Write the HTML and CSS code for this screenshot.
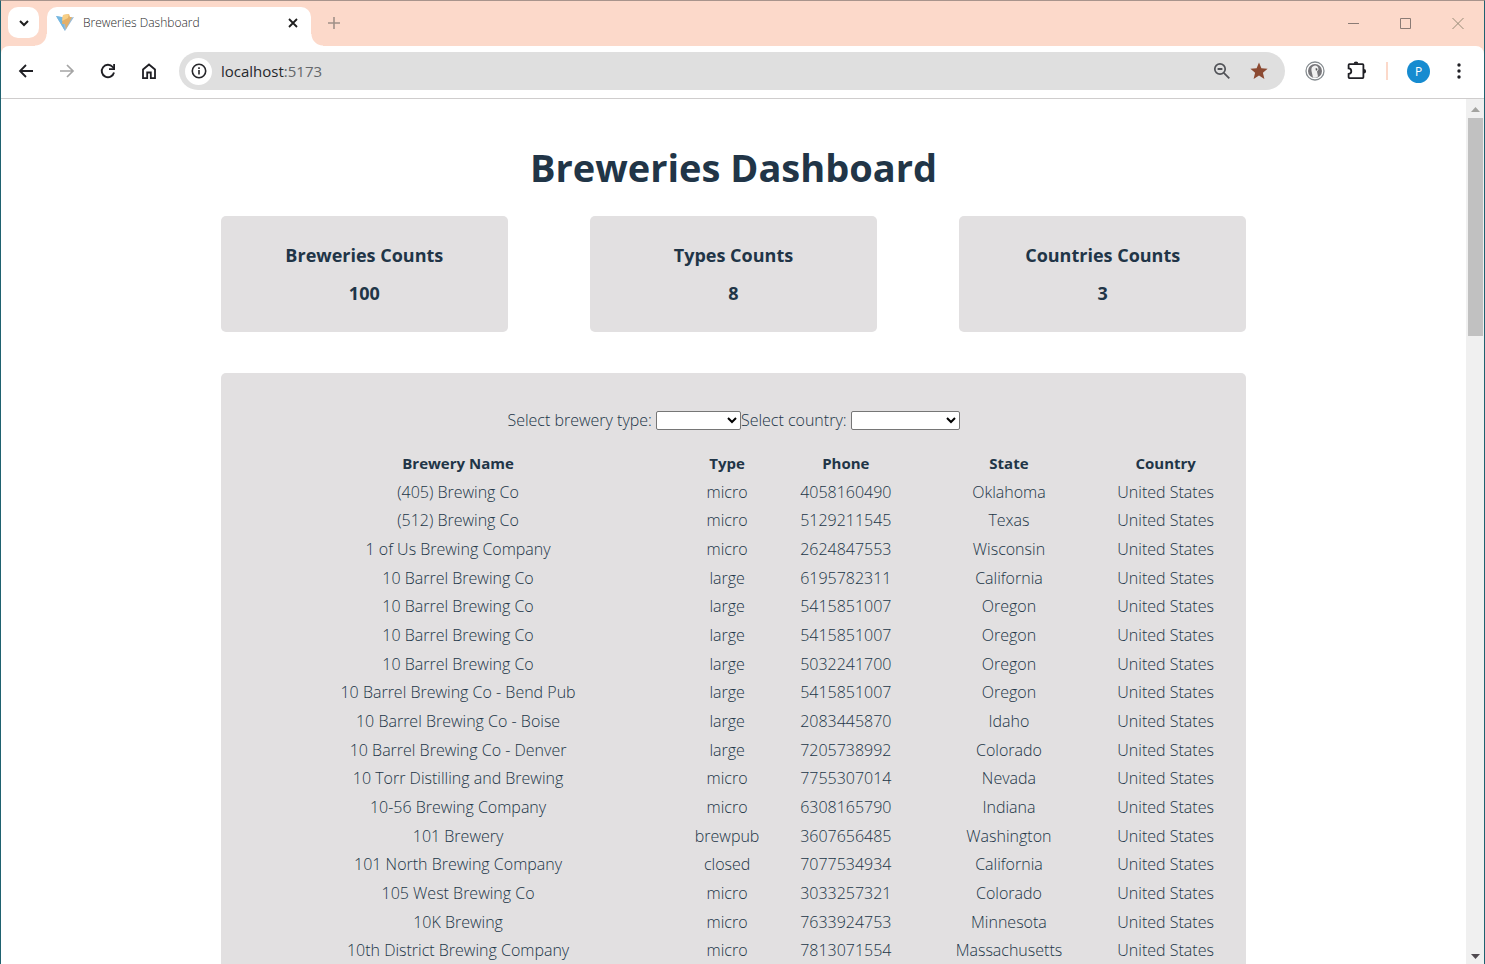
FILE: index.html
```html
<!DOCTYPE html>
<html lang="en">
<head>
<meta charset="utf-8">
<title>Breweries Dashboard</title>
<link rel="stylesheet" href="styles.css">
</head>
<body>
<div class="window">
  <header class="tabstrip">
    <button class="tab-search" aria-label="Search tabs"><svg width="12" height="12" viewBox="0 0 12 12"><path d="M2 4l4 4 4-4" fill="none" stroke="#1f1f1f" stroke-width="2"/></svg></button>
    <div class="tab">
      <svg class="favicon" width="20" height="20" viewBox="0 0 20 20"><path d="M1 3l9 15 9-14-6 1-7-1z" fill="#9bbcd8"/><path d="M1 3l6 1 3 14z" fill="#74b8e2"/><path d="M8 2l6-1 1 3 2 0-6 12-1-5-3 0z" fill="#e3b06a"/><path d="M8 2l6-1-1 4-6 3z" fill="#f8cf85"/></svg>
      <span class="tab-title">Breweries Dashboard</span>
      <button class="plain" aria-label="Close tab"><svg width="12" height="12" viewBox="0 0 12 12"><path d="M2 2l8 8M10 2l-8 8" stroke="#1f1f1f" stroke-width="1.8"/></svg></button>
    </div>
    <button class="plain new-tab" aria-label="New tab"><svg width="12" height="12" viewBox="0 0 12 12"><path d="M6 0v12M0 6h12" stroke="#a09088" stroke-width="1.6"/></svg></button>
    <div class="window-controls">
      <button class="plain" aria-label="Minimize"><svg width="12" height="12" viewBox="0 0 12 12"><path d="M0 6.500h11" stroke="#8a7b75"/></svg></button>
      <button class="plain" aria-label="Maximize"><svg width="12" height="12" viewBox="0 0 12 12"><path d="M.5 1.500h10v10H.5z" fill="none" stroke="#8a7b75"/></svg></button>
      <button class="plain" aria-label="Close"><svg width="12" height="12" viewBox="0 0 12 12"><path d="M.5 1l11 11M11.500 1l-11 11" stroke="#958a76"/></svg></button>
    </div>
  </header>
  <nav class="toolbar">
    <div class="nav-buttons">
      <button class="plain" aria-label="Back"><svg width="16" height="16" viewBox="0 0 16 16"><path d="M15 8H2.500M8 2L2 8l6 6" fill="none" stroke="#1f1f24" stroke-width="1.8"/></svg></button>
      <button class="plain" aria-label="Forward"><svg width="16" height="16" viewBox="0 0 16 16"><path d="M1 8h12.500M8 2l6 6-6 6" fill="none" stroke="#a5a5a5" stroke-width="1.700"/></svg></button>
      <button class="plain" aria-label="Reload"><svg width="16" height="16" viewBox="0 0 16 16"><path d="M14 9.500A6.200 6.200 0 1 1 12.700 4L14 5.500" fill="none" stroke="#1f1f24" stroke-width="1.9"/><path d="M15 1v6H9V5.200h4.200V1z" fill="#1f1f24"/></svg></button>
      <button class="plain" aria-label="Home"><svg width="16" height="16" viewBox="0 0 16 16"><path d="M2 15.200V6.500L8 1.500l6 5v8.700H9.800V9.500H6.200v5.700z" fill="none" stroke="#1f1f24" stroke-width="1.800"/></svg></button>
    </div>
    <div class="address">
      <button class="site-info" aria-label="Site information"><svg width="16" height="16" viewBox="0 0 16 16"><circle cx="8" cy="8" r="6.700" fill="none" stroke="#26262a" stroke-width="1.600"/><path d="M8 7v4.500M8 4.200v1.700" stroke="#26262a" stroke-width="1.600"/></svg></button>
      <a class="url" href="#">localhost<span class="port">:5173</span></a>
      <button class="plain" aria-label="Zoom"><svg width="18" height="18" viewBox="0 0 18 18"><circle cx="7" cy="7" r="5.200" fill="none" stroke="#515358" stroke-width="1.700"/><path d="M4.600 7h4.800M10.800 10.800l5.500 5.500" stroke="#515358" stroke-width="1.800"/></svg></button>
      <button class="plain" aria-label="Bookmark"><svg width="18" height="18" viewBox="0 0 18 18"><path d="M9 .5l2.400 5.700 6.200.5-4.700 4 1.500 6.300L9 13.600 3.600 17l1.500-6.300-4.700-4 6.200-.5z" fill="#8c4a32"/></svg></button>
    </div>
    <button class="plain" aria-label="Extension"><svg width="20" height="20" viewBox="0 0 20 20"><circle cx="10" cy="10" r="9" fill="#fff" stroke="#868c90" stroke-width="1.300"/><circle cx="10" cy="10" r="7" fill="#77767a"/><path d="M8 16.500L6.500 10c-.5-3 .5-5 3.500-5.500 2 0 3.500 1.500 3.500 4l-1.500 2 1 5c-2 1.500-3.500 1.500-5 1z" fill="#f0f0f0"/><path d="M10.500 7.500c1-.5 2 0 2 1l-1.500 1.500z" fill="#555"/></svg></button>
    <button class="plain" aria-label="Extensions"><svg width="20" height="20" viewBox="0 0 20 20"><path d="M2.400 3.200H15.600q.8 0 .8.800V16.300q0 .8-.8.800H2.400q-.8 0-.8-.8V13c1.900-.2 2.700-1.200 2.700-2.800S3.500 7.600 1.600 7.400V4q0-.8.800-.8z" fill="none" stroke="#1f1f24" stroke-width="1.800"/><path d="M6.700 2.700a2.300 2.300 0 0 1 4.600 0zM16.800 7.900a2.300 2.300 0 0 1 0 4.600z" fill="#1f1f24"/></svg></button>
    <span class="divider"></span>
    <button class="avatar" aria-label="Profile">P</button>
    <button class="plain" aria-label="Menu"><svg width="16" height="16" viewBox="0 0 16 16" fill="#1f1f24"><circle cx="8" cy="2" r="1.700"/><circle cx="8" cy="8" r="1.700"/><circle cx="8" cy="14" r="1.700"/></svg></button>
  </nav>
  <div class="viewport">
    <main class="page">
      <div class="content">
        <h1 class="title">Breweries Dashboard</h1>
        <section class="cards">
          <div class="card"><h2>Breweries Counts</h2><p>100</p></div>
          <div class="card"><h2>Types Counts</h2><p>8</p></div>
          <div class="card"><h2>Countries Counts</h2><p>3</p></div>
        </section>
        <section class="list">
          <div class="filters">
            <label for="type">Select brewery type:</label>
            <select id="type" class="select-type"><option></option><option>micro</option><option>large</option><option>brewpub</option><option>closed</option></select>
            <label for="country">Select country:</label>
            <select id="country" class="select-country"><option></option><option>United States</option></select>
          </div>
          <table class="breweries">
            <colgroup><col class="col-name"><col class="col-type"><col class="col-phone"><col class="col-state"><col class="col-country"></colgroup>
            <thead><tr><th>Brewery Name</th><th>Type</th><th>Phone</th><th>State</th><th>Country</th></tr></thead>
            <tbody>
              <tr><td>(405) Brewing Co</td><td>micro</td><td>4058160490</td><td>Oklahoma</td><td>United States</td></tr>
              <tr><td>(512) Brewing Co</td><td>micro</td><td>5129211545</td><td>Texas</td><td>United States</td></tr>
              <tr><td>1 of Us Brewing Company</td><td>micro</td><td>2624847553</td><td>Wisconsin</td><td>United States</td></tr>
              <tr><td>10 Barrel Brewing Co</td><td>large</td><td>6195782311</td><td>California</td><td>United States</td></tr>
              <tr><td>10 Barrel Brewing Co</td><td>large</td><td>5415851007</td><td>Oregon</td><td>United States</td></tr>
              <tr><td>10 Barrel Brewing Co</td><td>large</td><td>5415851007</td><td>Oregon</td><td>United States</td></tr>
              <tr><td>10 Barrel Brewing Co</td><td>large</td><td>5032241700</td><td>Oregon</td><td>United States</td></tr>
              <tr><td>10 Barrel Brewing Co - Bend Pub</td><td>large</td><td>5415851007</td><td>Oregon</td><td>United States</td></tr>
              <tr><td>10 Barrel Brewing Co - Boise</td><td>large</td><td>2083445870</td><td>Idaho</td><td>United States</td></tr>
              <tr><td>10 Barrel Brewing Co - Denver</td><td>large</td><td>7205738992</td><td>Colorado</td><td>United States</td></tr>
              <tr><td>10 Torr Distilling and Brewing</td><td>micro</td><td>7755307014</td><td>Nevada</td><td>United States</td></tr>
              <tr><td>10-56 Brewing Company</td><td>micro</td><td>6308165790</td><td>Indiana</td><td>United States</td></tr>
              <tr><td>101 Brewery</td><td>brewpub</td><td>3607656485</td><td>Washington</td><td>United States</td></tr>
              <tr><td>101 North Brewing Company</td><td>closed</td><td>7077534934</td><td>California</td><td>United States</td></tr>
              <tr><td>105 West Brewing Co</td><td>micro</td><td>3033257321</td><td>Colorado</td><td>United States</td></tr>
              <tr><td>10K Brewing</td><td>micro</td><td>7633924753</td><td>Minnesota</td><td>United States</td></tr>
              <tr><td>10th District Brewing Company</td><td>micro</td><td>7813071554</td><td>Massachusetts</td><td>United States</td></tr>
            </tbody>
          </table>
        </section>
      </div>
    </main>
    <div class="scrollbar">
      <svg width="9" height="5" viewBox="0 0 9 5"><path d="M0 5l4.500-5L9 5z" fill="#a3a3a0"/></svg>
      <div class="thumb"></div>
      <svg class="down" width="9" height="5" viewBox="0 0 9 5"><path d="M0 0l4.500 5L9 0z" fill="#504a50"/></svg>
    </div>
  </div>
</div>
</body>
</html>
```
FILE: styles.css
```css
* { box-sizing: border-box; }
body { margin: 0; font-family: "Open Sans", "Noto Sans", sans-serif; color: #213547; background: #fff; }
button { font-family: inherit; border: 0; padding: 0; background: none; }
svg { display: block; }
.window { height: 100vh; display: flex; flex-direction: column; overflow: hidden; border: 1px solid #1f6270; border-top-color: #a8948c; border-bottom: 0; background: #fcd9ca; }
.plain { display: flex; align-items: center; justify-content: center; flex: none; }

.tabstrip { display: flex; align-items: flex-start; flex: none; height: 45px; padding: 6px 20px 0 7px; }
.tab-search { width: 31px; height: 31px; border-radius: 10px; background: #fff; display: flex; align-items: center; justify-content: center; }
.tab { position: relative; display: flex; align-items: center; width: 264px; height: 39px; margin-left: 8px; padding: 0 12px 7px 8px; border-radius: 10px 10px 0 0; background: #fff; }
.tab::before, .tab::after { content: ""; position: absolute; bottom: 0; width: 12px; height: 12px; }
.tab::before { left: -12px; background: radial-gradient(circle at 0 0, transparent 11px, #fff 12px); }
.tab::after { right: -12px; background: radial-gradient(circle at 100% 0, transparent 11px, #fff 12px); }
.tab-title { flex: 1; margin-left: 8px; font-size: 12px; line-height: 16px; font-weight: 350; color: #1f1f1f; }
.new-tab { margin: 10px 0 0 17px; }
.window-controls { display: flex; gap: 40px; margin: 10px 0 0 auto; }

.toolbar { display: flex; align-items: center; flex: none; height: 53px; padding: 0 17px 2px 17px; border-bottom: 1px solid #cfcdcd; border-radius: 8px 8px 0 0; background: #fff; }
.nav-buttons { display: flex; gap: 25px; margin-right: 22px; }
.address { display: flex; align-items: center; flex: 1; height: 38px; margin-right: 20px; padding: 0 17px 0 6px; border-radius: 19px; background: #dfdfdf; }
.site-info { width: 27px; height: 27px; border-radius: 50%; background: #fff; display: flex; align-items: center; justify-content: center; }
.url { flex: 1; margin-left: 9px; font-size: 15px; color: #25282c; text-decoration: none; }
.port { color: #65676a; }
.address .plain + .plain { margin-left: 19px; }
.toolbar > .plain + .plain { margin-left: 22px; }
.divider { width: 2px; height: 18px; margin: 0 19px; background: #fcd9ca; }
.avatar { width: 23px; height: 23px; margin-right: 21px; border-radius: 50%; background: #168bd0; color: #fff; font-size: 12px; line-height: 23px; }

.viewport { display: flex; flex: 1; min-height: 0; background: #fff; }
.page { flex: 1; overflow: hidden; }
.content { width: 70%; margin: 0 auto; padding-top: 40px; text-align: center; }
.title { margin: 0; font-size: 38px; line-height: 56px; font-weight: 700; }
.cards { display: flex; justify-content: space-between; margin-top: 21px; }
.card { width: 28%; padding: 20px; border-radius: 5px; background: #e2e0e1; font-size: 18px; line-height: 38px; font-weight: 700; }
.card h2, .card p { margin: 0; font-size: 18px; }
.list { margin-top: 41px; padding: 32px 20px; border-radius: 5px; background: #e2e0e1; font-size: 16px; font-weight: 350; }
.filters { display: flex; align-items: center; justify-content: center; height: 30px; line-height: 30px; }
.filters select { height: 19px; padding: 0; border: 1px solid #767676; border-radius: 2px; background: #fff; color: #000; }
.filters label { white-space: nowrap; }
.select-type { width: 85px; margin-left: 4px; }
.select-country { width: 109px; margin-left: 4px; }
.breweries { width: 100%; margin-top: 14px; table-layout: fixed; border-collapse: collapse; line-height: 25px; }
.breweries th, .breweries td { padding: 2px 0; white-space: nowrap; }
.breweries th { font-size: 15px; font-weight: 700; }
.breweries tbody tr:nth-child(3n + 1) td { padding-bottom: 1px; }
.col-name { width: 44.1%; }
.col-type { width: 10.5%; }
.col-phone { width: 13.6%; }
.col-state { width: 19.5%; }
.col-country { width: 12.3%; }

.scrollbar { display: flex; flex-direction: column; align-items: center; flex: none; width: 18px; padding: 8px 0 5px; background: #f0f0f0; }
.thumb { width: 15px; height: 25.6%; margin-top: 6px; background: #c1c1c1; }
.down { margin-top: auto; }
```
